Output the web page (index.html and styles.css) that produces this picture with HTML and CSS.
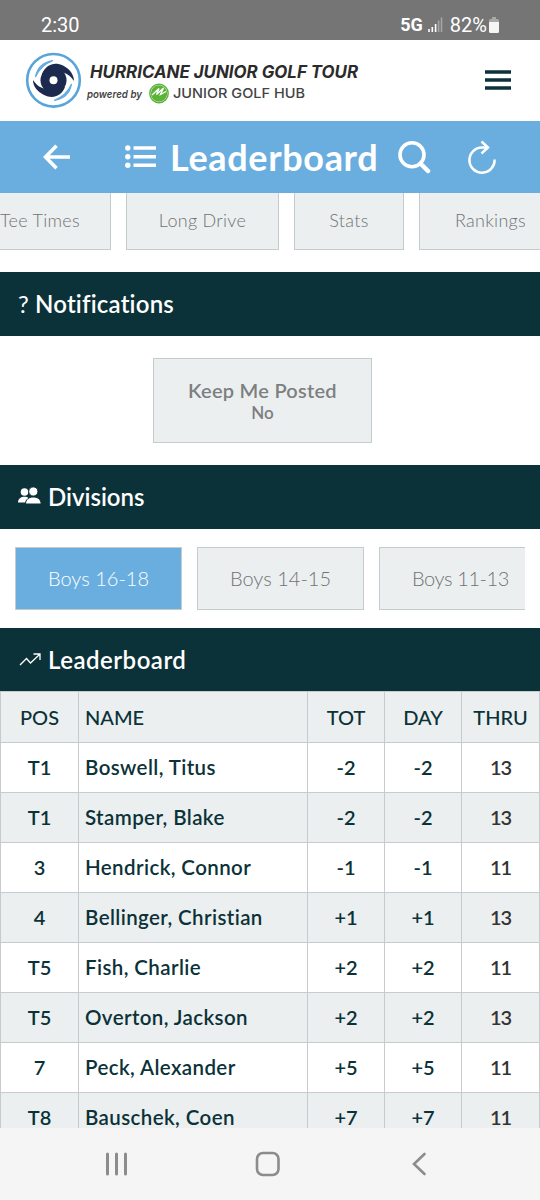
FILE: index.html
```
<!DOCTYPE html>
<html lang="en">
<head>
    <meta charset="UTF-8">
    <meta name="viewport" content="width=device-width, initial-scale=1.0">
    <title>Leaderboard</title>
    <link rel="stylesheet" href="styles.css">
</head>
<body>
    <div class="status-bar">
        <span class="clock">2:30</span>
        <div class="status-icons">
            <span class="network">5G</span>
            <svg class="signal" width="15" height="15" viewBox="0 0 15 15">
                <path d="M1 15v-3M4.3 15v-5M7.6 15V7" stroke="#fff" stroke-width="1.6"/>
                <path d="M10.6 15V3.500M13.500 15V0.500" stroke="#a5a5a5" stroke-width="1.6"/>
            </svg>
            <span class="percent">82%</span>
            <svg class="battery" width="10" height="16" viewBox="0 0 10 16">
                <path d="M3 0h4v2h1.500a1.500 1.500 0 0 1 1.500 1.500V6H0V3.500A1.500 1.500 0 0 1 1.500 2H3z" fill="#a8a8a8"/>
                <path d="M0 5h10v9.500a1.500 1.500 0 0 1-1.500 1.500h-7A1.500 1.500 0 0 1 0 14.500z" fill="#f5f5f5"/>
            </svg>
        </div>
    </div>

    <header>
        <svg class="logo" width="345" height="60" viewBox="0 0 345 60">
            <circle cx="33.500" cy="30.300" r="26.300" fill="#fff" stroke="#58a5db" stroke-width="2.600"/>
            <path d="M15.500 27C17 18 23 12 33 10.500C24 14 19 19 15.500 27zM51.500 34C50 43 44 49 34 50.500C43 47 48 42 51.500 34z" fill="#62abdf" stroke="#62abdf" stroke-width="1.200"/>
            <circle cx="33.500" cy="30.300" r="13" fill="#1b2a4e"/>
            <path d="M22 24C26 14 35 11.500 43 15.500C50 19 54 25 54 31C50 25 46 23 41 22zM45 37C41 47 32 49 24 45C17 41.500 13 36 13 30C17 36 21 38 26 39z" fill="#1b2a4e"/>
            <circle cx="33.500" cy="30.300" r="4" fill="#fff"/>
            <text class="logo-title" x="70" y="38" textLength="268" lengthAdjust="spacingAndGlyphs">HURRICANE JUNIOR GOLF TOUR</text>
            <text class="logo-powered" x="67" y="57.500" textLength="55" lengthAdjust="spacingAndGlyphs">powered by</text>
            <circle cx="139" cy="43.500" r="9.200" fill="#fff" stroke="#5cb338" stroke-width="1.400"/>
            <circle cx="139" cy="43.500" r="8.200" fill="#5cb338"/>
            <path d="M132 45l7-6.500-2.500 6 7-6.500-3 6.500 5.500-3" fill="none" stroke="#fff" stroke-width="1.300"/>
            <text class="logo-hub" x="153" y="58" textLength="132" lengthAdjust="spacingAndGlyphs">JUNIOR GOLF HUB</text>
        </svg>
        <svg class="menu" width="26" height="20" viewBox="0 0 26 20">
            <path d="M0 2h26M0 10h26M0 18h26" stroke="#0b3238" stroke-width="3.400"/>
        </svg>
    </header>

    <nav class="title-bar">
        <svg class="back" width="27" height="26" viewBox="0 0 27 26">
            <path d="M13.500 1.800L2.500 13l11 11.200M2.500 13H27" fill="none" stroke="#fff" stroke-width="3.600"/>
        </svg>
        <svg class="list" width="32" height="24" viewBox="0 0 32 24">
            <circle cx="2.800" cy="3" r="2.700" fill="#fff"/>
            <circle cx="2.800" cy="11.700" r="2.700" fill="#fff"/>
            <circle cx="2.800" cy="20.300" r="2.700" fill="#fff"/>
            <path d="M8.500 3H31M8.500 11.700H31M8.500 20.300H31" stroke="#fff" stroke-width="3.600"/>
        </svg>
        <h1>Leaderboard</h1>
        <svg class="search" width="33" height="33" viewBox="0 0 33 33">
            <circle cx="14" cy="13.800" r="12" fill="none" stroke="#fff" stroke-width="3.600"/>
            <path d="M22.500 22.500L30 30" stroke="#fff" stroke-width="4.500" stroke-linecap="round"/>
        </svg>
        <svg class="refresh" width="30" height="34" viewBox="0 0 30 34">
            <path d="M20.500 7.500H15A12.600 12.600 0 1 0 27.600 19.500" fill="none" stroke="#fff" stroke-width="2.500"/>
            <path d="M14.500 1.500L21 7.500L14.500 13.500" fill="none" stroke="#fff" stroke-width="2.500"/>
        </svg>
    </nav>

    <div class="tabs">
        <a class="tab tee-times">Tee Times</a>
        <a class="tab long-drive">Long Drive</a>
        <a class="tab stats">Stats</a>
        <a class="tab rankings">Rankings</a>
    </div>

    <h2 class="section-title notifications"><span class="question">?</span>Notifications</h2>
    <div class="notify">
        <div class="notify-box">
            <strong>Keep Me Posted</strong>
            <span>No</span>
        </div>
    </div>

    <h2 class="section-title divisions-title">
        <svg width="24" height="18" viewBox="0 0 24 18">
            <circle cx="6.500" cy="5" r="3.800" fill="#fff"/>
            <path d="M0 15.500c0-4 3-5.800 6.500-5.800 2 0 3 .5 4 1.300L7 15.500z" fill="#fff"/>
            <circle cx="15.300" cy="4.500" r="4.600" fill="#fff" stroke="#0b3238"/>
            <path d="M7.500 17c0-4.700 3.500-7 7.800-7s7.800 2.300 7.800 7z" fill="#fff" stroke="#0b3238"/>
        </svg>
        Divisions
    </h2>
    <div class="divisions">
        <a class="division active">Boys 16-18</a>
        <a class="division">Boys 14-15</a>
        <a class="division last">Boys 11-13</a>
    </div>

    <h2 class="section-title board-title">
        <svg width="24" height="18" viewBox="0 0 24 18">
            <path d="M2 14l6.500-6.500 4 4.500 9-8.500M15.500 3H22v6" fill="none" stroke="#fff" stroke-width="1.300"/>
        </svg>
        Leaderboard
    </h2>
    <div class="board">
        <table>
            <colgroup>
                <col class="col-pos">
                <col class="col-name">
                <col class="col-score">
                <col class="col-score">
                <col class="col-thru">
            </colgroup>
            <tr><th>POS</th><th class="name">NAME</th><th>TOT</th><th>DAY</th><th>THRU</th></tr>
            <tr><td>T1</td><td class="name">Boswell, Titus</td><td class="score">-2</td><td class="score">-2</td><td class="thru">13</td></tr>
            <tr><td>T1</td><td class="name">Stamper, Blake</td><td class="score">-2</td><td class="score">-2</td><td class="thru">13</td></tr>
            <tr><td>3</td><td class="name">Hendrick, Connor</td><td class="score">-1</td><td class="score">-1</td><td class="thru">11</td></tr>
            <tr><td>4</td><td class="name">Bellinger, Christian</td><td class="score">+1</td><td class="score">+1</td><td class="thru">13</td></tr>
            <tr><td>T5</td><td class="name">Fish, Charlie</td><td class="score">+2</td><td class="score">+2</td><td class="thru">11</td></tr>
            <tr><td>T5</td><td class="name">Overton, Jackson</td><td class="score">+2</td><td class="score">+2</td><td class="thru">13</td></tr>
            <tr><td>7</td><td class="name">Peck, Alexander</td><td class="score">+5</td><td class="score">+5</td><td class="thru">11</td></tr>
            <tr><td>T8</td><td class="name">Bauschek, Coen</td><td class="score">+7</td><td class="score">+7</td><td class="thru">11</td></tr>
        </table>
    </div>

    <footer>
        <svg width="24" height="26" viewBox="0 0 24 26">
            <path d="M2.500 3v20M11.500 3v20M20.500 3v20" stroke="#8c8c8c" stroke-width="3" stroke-linecap="round"/>
        </svg>
        <svg class="home" width="26" height="26" viewBox="0 0 26 26">
            <rect x="2" y="2" width="21.500" height="22" rx="6" fill="none" stroke="#8c8c8c" stroke-width="2.600"/>
        </svg>
        <svg width="16" height="26" viewBox="0 0 16 26">
            <path d="M13.500 3L3 13l10.500 10" fill="none" stroke="#8c8c8c" stroke-width="2.600" stroke-linecap="round"/>
        </svg>
    </footer>
</body>
</html>
```
FILE: styles.css
```
* {
    margin: 0;
    padding: 0;
    box-sizing: border-box;
}

body {
    width: 540px;
    height: 1200px;
    overflow: hidden;
    font-family: Lato, sans-serif;
    font-variant-ligatures: none;
    background-color: #fff;
    color: #0b3238;
}

svg {
    display: block;
    flex: none;
}

.status-bar {
    display: flex;
    justify-content: space-between;
    height: 40px;
    padding: 9px 41px 0;
    background-color: #757575;
    color: #fff;
    font-family: Roboto, sans-serif;
    font-size: 20px;
    line-height: 32px;
}

.status-icons {
    display: flex;
}

.network {
    font-size: 18px;
    font-weight: bold;
}

.signal {
    margin: 8px 7px 0 5px;
}

.battery {
    margin: 8px 0 0 2px;
}

header {
    display: flex;
    justify-content: space-between;
    height: 81px;
    padding: 10px 29px 0 20px;
}

.menu {
    margin-top: 20px;
}

.logo text {
    transform: translateY(-10px);
}

.logo-title {
    font: italic bold 17px Inter, sans-serif;
    fill: #2b2b2b;
}

.logo-powered {
    font: italic 600 11px Inter, sans-serif;
    fill: #444;
}

.logo-hub {
    font: 500 13.5px Inter, sans-serif;
    fill: #444;
}

/* Blue title bar */
.title-bar {
    display: flex;
    align-items: center;
    height: 72px;
    padding-left: 43px;
    background-color: #6aaedf;
    color: #fff;
}

.list {
    margin-left: 55px;
}

h1 {
    width: 209px;
    margin: 0 19px 0 13px;
    font-size: 36px;
    font-weight: bold;
    letter-spacing: 0.65px;
    white-space: nowrap;
}

.refresh {
    margin-left: 36px;
}

.tabs {
    display: flex;
    gap: 15px;
    height: 79px;
    overflow: hidden;
}

.tab {
    flex: none;
    height: 57px;
    border: 1px solid #c5cccd;
    border-top: none;
    background-color: #ebeff0;
    color: #707374;
    font-size: 18px;
    font-weight: 300;
    letter-spacing: 0.3px;
    line-height: 54px;
    text-align: center;
}

.tee-times {
    width: 111px;
    border-left: none;
    text-align: left;
    white-space: nowrap;
}

.long-drive {
    width: 153px;
}

.stats {
    width: 110px;
}

.rankings {
    width: 143px;
}

.section-title {
    display: flex;
    align-items: center;
    gap: 6px;
    height: 64px;
    padding: 0 0 2px 18px;
    background-color: #0b3238;
    color: #fff;
    font-size: 24px;
    font-weight: 600;
    letter-spacing: 0.2px;
}

.board-title {
    height: 63px;
    padding-bottom: 0;
    letter-spacing: 0.5px;
}

.divisions-title {
    letter-spacing: 0;
}

.question {
    font-weight: normal;
}

.notify {
    display: flex;
    justify-content: center;
    height: 129px;
    padding: 22px 15px 0 0;
}

.notify-box {
    display: flex;
    flex-direction: column;
    align-items: center;
    width: 219px;
    height: 85px;
    padding-top: 19px;
    border: 1px solid #c5cccd;
    background-color: #ebeff0;
    color: #7d7f80;
    font-size: 17px;
    font-weight: 600;
    line-height: 22px;
}

.notify-box strong {
    font-size: 20px;
    font-weight: 600;
    letter-spacing: 0.25px;
    line-height: 24px;
}

.divisions {
    display: flex;
    gap: 15px;
    height: 99px;
    margin: 0 15px;
    padding-top: 18px;
    overflow: hidden;
}

.division {
    flex: none;
    width: 167px;
    height: 63px;
    border: 1px solid #c5cccd;
    background-color: #ebeff0;
    color: #707374;
    font-size: 20px;
    font-weight: 300;
    line-height: 61px;
    text-align: center;
}

.division.active {
    background-color: #6aaedf;
    color: #fff;
}

.division.last {
    padding-right: 4px;
    letter-spacing: -0.4px;
}

.board {
    height: 437px;
    overflow: hidden;
}

table {
    width: 540px;
    table-layout: fixed;
    border-collapse: collapse;
}

.col-pos {
    width: 78px;
}

.col-name {
    width: 229px;
}

.col-score {
    width: 77px;
}

th, td {
    height: 50px;
    padding-bottom: 1px;
    border: 1px solid #c5cccd;
    font-size: 20px;
    font-weight: 600;
    text-align: center;
}

th {
    height: 51px;
    font-weight: 500;
}

tr:nth-child(odd) {
    background-color: #ebeff0;
}

.name {
    padding-left: 6px;
    text-align: left;
}

td.name {
    font-size: 20.5px;
    letter-spacing: 0.4px;
}

.thru {
    color: #333;
    letter-spacing: -1px;
}

/* Phone navigation */
footer {
    display: flex;
    align-items: center;
    justify-content: space-between;
    height: 72px;
    padding: 0 113px 0 105px;
    background-color: #f5f5f5;
}

.home {
    margin-right: 4px;
}
```
